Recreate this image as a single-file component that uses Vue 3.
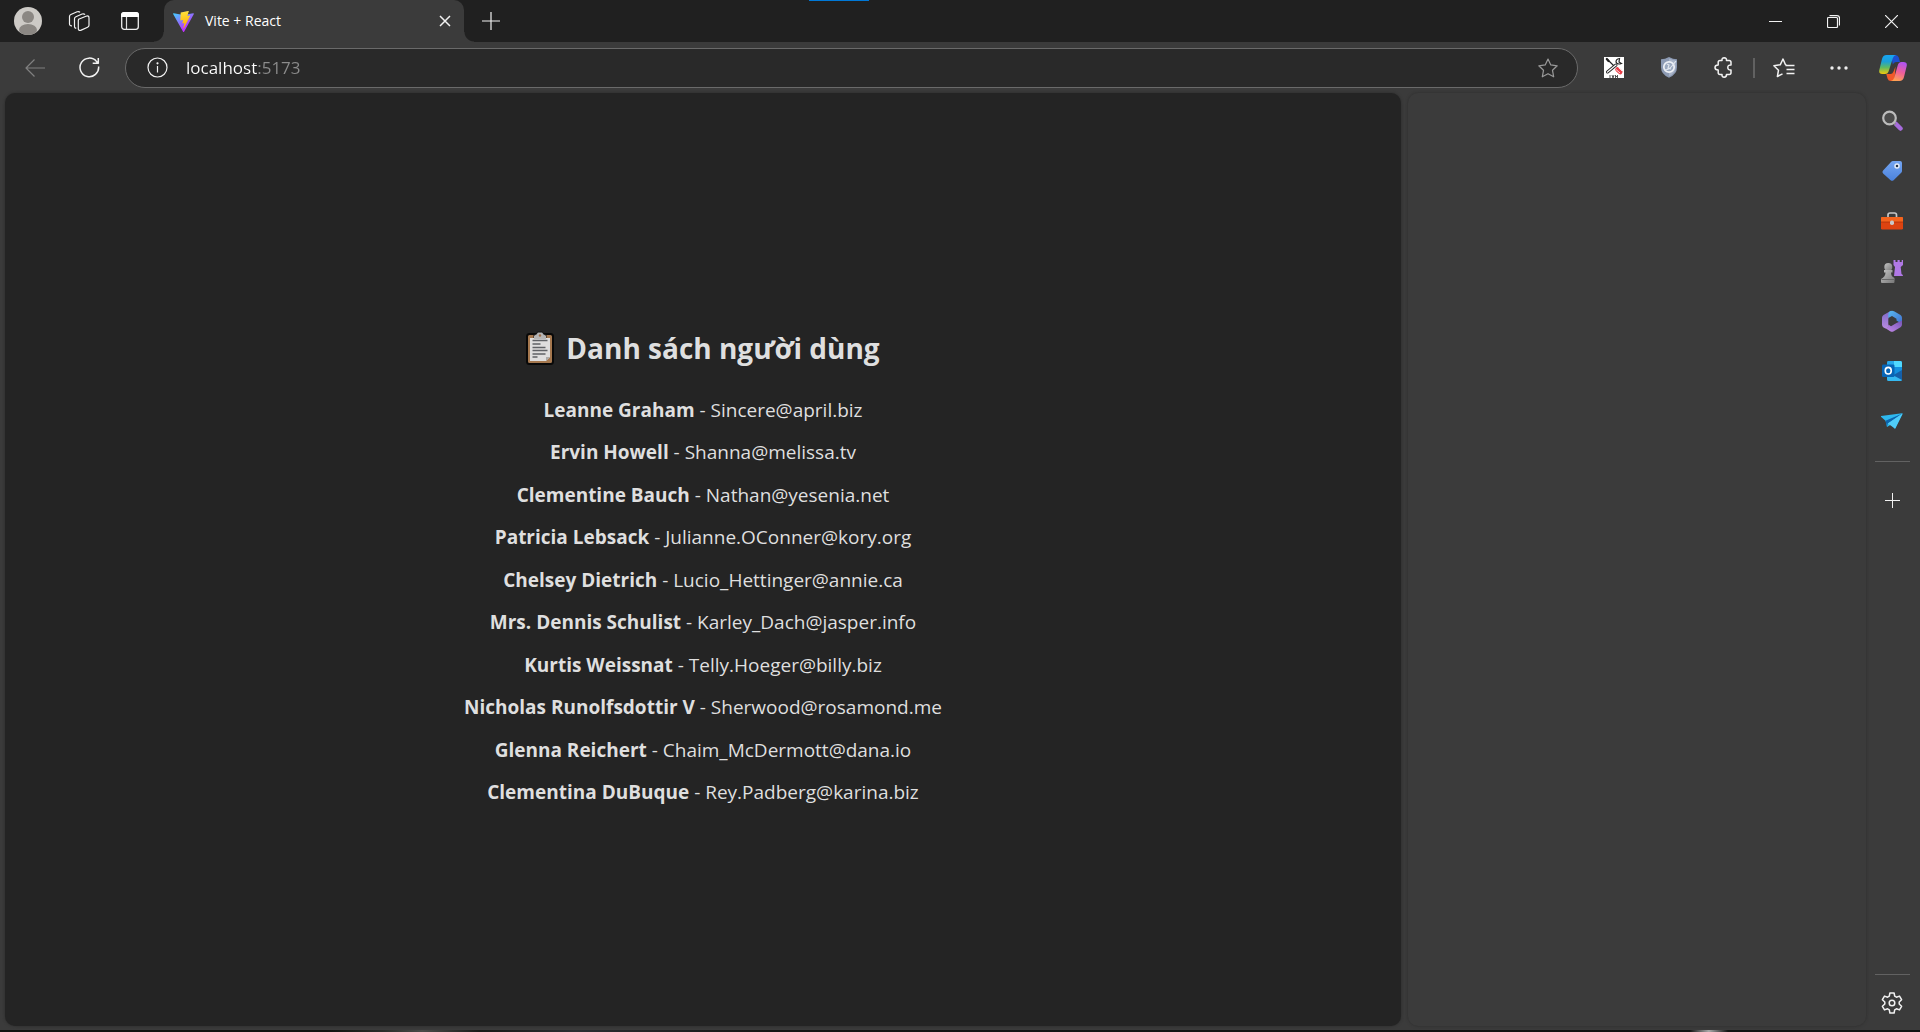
<script setup>
import { ref } from 'vue'

const address = ref('localhost:5173')

const users = [
  { name: 'Leanne Graham', email: 'Sincere@april.biz' },
  { name: 'Ervin Howell', email: 'Shanna@melissa.tv' },
  { name: 'Clementine Bauch', email: 'Nathan@yesenia.net' },
  { name: 'Patricia Lebsack', email: 'Julianne.OConner@kory.org' },
  { name: 'Chelsey Dietrich', email: 'Lucio_Hettinger@annie.ca' },
  { name: 'Mrs. Dennis Schulist', email: 'Karley_Dach@jasper.info' },
  { name: 'Kurtis Weissnat', email: 'Telly.Hoeger@billy.biz' },
  { name: 'Nicholas Runolfsdottir V', email: 'Sherwood@rosamond.me' },
  { name: 'Glenna Reichert', email: 'Chaim_McDermott@dana.io' },
  { name: 'Clementina DuBuque', email: 'Rey.Padberg@karina.biz' },
]
</script>

<template>
  <div class="browser">
    <header class="titlebar">
      <button class="strip-btn" aria-label="Profile">
        <svg width="28" height="28" viewBox="0 0 28 28">
          <clipPath id="avatar"><circle cx="14" cy="14" r="14" /></clipPath>
          <g clip-path="url(#avatar)">
            <rect width="28" height="28" fill="#cdcac6" />
            <ellipse cx="14" cy="23" rx="9" ry="6" fill="#8b8783" />
            <circle cx="14" cy="10" r="6.8" fill="#cdcac6" />
            <circle cx="14" cy="10" r="6" fill="#8b8783" />
          </g>
        </svg>
      </button>
      <button class="strip-btn" aria-label="Workspaces">
        <svg class="line" width="22" height="22" viewBox="0 0 22 22">
          <path d="M10.600 9.300 18 6.200q3-1 3 1.700v7.300q0 1.400-1.400 2l-6.400 2.900q-2.900 1.100-2.900-1.700v-7.200q0-1.300.3-1.900Z" />
          <path d="M8.300 18.200q-1.800.1-1.800-1.900V8.700q0-1.400 1.400-2l6.200-2.700q2-.6 2.900.7" />
          <path d="M4 15.800q-2.500.2-2.500-2.100V6.500q0-1.400 1.400-2l6.200-2.700q2-.6 2.900.6" />
        </svg>
      </button>
      <button class="strip-btn" aria-label="Tab actions">
        <svg width="18" height="18" viewBox="0 0 18 18">
          <rect x=".7" y=".7" width="16.600" height="16.600" rx="2.500" fill="none" stroke="#eee" stroke-width="1.300" />
          <path d="M0 5V3q0-3 3-3h12q3 0 3 3v2Z" fill="#fff" />
          <path d="M5.500 5v12.500" stroke="#ddd" stroke-width="1.200" />
        </svg>
      </button>
      <div class="tab">
        <svg width="21" height="21" viewBox="0 0 256 257">
          <defs>
            <linearGradient id="viteA" x1="0" y1="0" x2=".6" y2=".8">
              <stop offset="0" stop-color="#41d1ff" /><stop offset="1" stop-color="#bd34fe" />
            </linearGradient>
            <linearGradient id="viteB" x1=".4" y1="0" x2=".5" y2="1">
              <stop offset="0" stop-color="#ffea83" /><stop offset=".1" stop-color="#ffdd35" /><stop offset="1" stop-color="#ffa800" />
            </linearGradient>
          </defs>
          <path fill="url(#viteA)" d="M255 38 135 253c-3 4-9 4-12 0L1 38c-3-5 1-11 7-10l120 22 119-22c6-1 10 5 8 10Z" />
          <path fill="url(#viteB)" d="M185 0 97 17c-2 0-3 2-3 4l-5 91c0 2 2 4 4 3l25-5c2-1 4 1 4 4l-8 35c0 3 2 5 4 4l16-5c2 0 4 2 4 4l-12 57c0 3 4 5 6 2l77-151c1-3-1-5-4-4l-25 4c-3 1-5-1-4-3l17-54c0-2-2-4-8-3Z" />
        </svg>
        <span class="tab-title">Vite + React</span>
        <button class="tab-close" aria-label="Close tab">
          <svg class="line bold" width="12" height="12" viewBox="0 0 12 12"><path d="m1 1 10 10M11 1 1 11" /></svg>
        </button>
      </div>
      <button class="new-tab" aria-label="New tab">
        <svg class="line" width="18" height="18" viewBox="0 0 18 18"><path d="M9 0v18M0 9h18" /></svg>
      </button>
      <div class="window-controls">
        <button aria-label="Minimize">
          <svg class="line crisp" width="13" height="13" viewBox="0 0 13 13"><path d="M0 6.500h13" /></svg>
        </button>
        <button aria-label="Restore">
          <svg class="line" width="13" height="13" viewBox="0 0 13 13">
            <rect x=".5" y="2.500" width="10" height="10" rx="1" /><path d="M2.500.6h7.500q2.500 0 2.500 2.500v7.500" />
          </svg>
        </button>
        <button aria-label="Close">
          <svg class="line" width="13" height="13" viewBox="0 0 13 13"><path d="m0 0 13 13M13 0 0 13" /></svg>
        </button>
      </div>
      <i class="drag-mark"></i>
    </header>

    <nav class="toolbar">
      <button class="tool dim" aria-label="Back">
        <svg class="line" width="20" height="18" viewBox="0 0 20 18"><path d="M20 9H1M9.500.5 1 9l8.500 8.500" /></svg>
      </button>
      <button class="tool" aria-label="Refresh">
        <svg class="line bold" width="21" height="21" viewBox="0 0 21 21">
          <path d="M19.600 9.500A9.300 9.300 0 1 1 17.600 4.600L19 6M19.300 1v5.300h-5.600" />
        </svg>
      </button>
      <div class="address">
        <button aria-label="Site information">
          <svg class="line" width="21" height="21" viewBox="0 0 21 21">
            <circle cx="10.500" cy="10.500" r="9.500" /><path d="M10.500 9v6.500" /><circle cx="10.500" cy="6.300" r=".5" fill="#fff" />
          </svg>
        </button>
        <input v-model="address" type="text" aria-label="Address" spellcheck="false" />
        <button class="grey" aria-label="Add to favorites">
          <svg class="line" width="20" height="20" viewBox="0 0 20 20">
            <path d="m10 1 2.800 5.900 6.400.9-4.700 4.500 1.200 6.500L10 15.700l-5.700 3.100 1.200-6.500L.8 7.800l6.400-.9Z" />
          </svg>
        </button>
      </div>
      <div class="extensions">
        <button class="tool" aria-label="Repair tools extension">
          <svg width="20" height="21" viewBox="0 0 20 21">
            <rect width="20" height="21" fill="#fff" />
            <g fill="none" stroke="#222" stroke-linecap="round">
              <path d="m3.500 2.500 6 6" stroke-width="1.200" /><path d="m2.800 2 1.700 2" stroke-width="2.200" />
              <path d="m12 8-8.500 7" stroke-width="3" /><path d="m12 8-8.500 7" stroke="#fff" stroke-width="1.200" />
              <path d="M15.500 1.500q-3.500.5-3.500 3.500 1 3 5.500 1.500l-2.500-1.500Z" stroke-width="1.200" />
            </g>
            <path d="m13.500 12.500 2.800 2.500" stroke="#e8404a" stroke-width="4.500" stroke-linecap="round" />
            <path d="m12 12.500 4 3.500m-1.500-5.500 3.500 3.500" stroke="#fff" stroke-width=".8" />
            <path d="M6 18v3M8 18l1 3 1-3M11.500 18v3M13.500 18v3m-2-1.500h2" stroke="#555" fill="none" />
          </svg>
        </button>
        <button class="tool" aria-label="Security extension">
          <svg width="18" height="21" viewBox="0 0 18 21">
            <path d="M9 0q4 2.200 8 2.200v8q0 7-8 10.500-8-3.500-8-10.500v-8q4 0 8-2.200Z" fill="#8d9bb4" />
            <path d="M9 1.500q3.500 1.700 6.700 1.900v7q0 5.500-6.700 8.800Z" fill="#a8b3c7" />
            <circle cx="9" cy="10" r="5.200" fill="#9ba9bf" stroke="#eef1f6" stroke-width="1.700" />
            <path d="M4 13q5 0 8-4l4-5M7 7l2 1-1 3 3 1" fill="none" stroke="#e2e7ef" stroke-width="1.200" />
          </svg>
        </button>
        <button class="tool" aria-label="Extensions">
          <svg class="line bold" width="19" height="21" viewBox="0 0 19 21">
            <path d="M6 3.500h2q-.3-2.500 2.200-2.700 2.500.2 2.300 2.700h2.700q1.800 0 1.800 1.800V8q-3.200-.2-3.200 2.500t3.200 2.500v2.800q0 1.700-1.800 1.700h-2.700q.2 2.500-2.300 2.700-2.500-.2-2.200-2.700H6q-1.800 0-1.800-1.700V13Q1 13 1 10.500T4.200 8V5.300q0-1.800 1.800-1.800Z" />
          </svg>
        </button>
        <i class="divider"></i>
        <button class="tool" aria-label="Favorites">
          <svg class="line bold" width="22" height="20" viewBox="0 0 22 20">
            <path d="m13.500 7-1-.2L10 1 7.200 6.800l-6.300.9 4.600 4.500-1.100 6.300 5.100-2.700M12.500 7.500h9M13.500 11.500h8M13.500 15.500h8" />
          </svg>
        </button>
        <button class="tool" aria-label="Settings and more">
          <svg width="18" height="4" viewBox="0 0 18 4" fill="#eee"><circle cx="2" cy="2" r="1.700" /><circle cx="9" cy="2" r="1.700" /><circle cx="16" cy="2" r="1.700" /></svg>
        </button>
        <button class="copilot" aria-label="Copilot">
          <svg width="28" height="26" viewBox="0 0 28 26">
            <defs>
              <linearGradient id="copA" x1="0" y1="0" x2="0" y2="1">
                <stop offset="0" stop-color="#17a5f2" /><stop offset=".35" stop-color="#1b9fd8" /><stop offset=".65" stop-color="#5cba64" /><stop offset="1" stop-color="#f3c80c" />
              </linearGradient>
              <linearGradient id="copB" x1=".6" y1="0" x2=".3" y2="1">
                <stop offset="0" stop-color="#b254ef" /><stop offset=".5" stop-color="#ef5f9a" /><stop offset="1" stop-color="#ffa451" />
              </linearGradient>
            </defs>
            <path d="M12 0h4.500q2.500 0 3.300 2.500L21 7h-4q-2.300 0-3.200 2.500Z" fill="#1d4fcf" />
            <path d="M15.500 26H12q-2.700 0-3.500-2.500L7.300 19h4.200q2 0 3-2.500l2-5Z" fill="#f1592a" />
            <path d="M7.500 0H17q-2.300.3-3.300 3.500l-3.800 12Q9 19 6 19H3.300Q-.5 19 .3 15L3 4Q4 0 7.500 0Z" fill="url(#copA)" />
            <path d="M20.500 26H12q2.500-.5 3.300-3.500l3.400-12Q19.500 7 22.500 7h2q4 0 3.200 4L25 22q-1 4-4.500 4Z" fill="url(#copB)" />
          </svg>
        </button>
      </div>
    </nav>

    <div class="workspace">
      <main class="page">
        <section class="content">
          <h2>
            <svg width="28" height="34" viewBox="0 0 28 34" role="img" aria-label="Clipboard">
              <rect x="1" y="3" width="26" height="30" rx="2.500" fill="#a5784f" stroke="#090909" stroke-width="2" />
              <path d="M8 3.500Q11 4 11.500 1h5Q17 4 20 3.500V8H8Z" fill="#aaa" stroke="#111" stroke-width="1" />
              <path d="M4 7h20v19l-4 4H4Z" fill="#dedede" />
              <path d="M8 8V5q3 0 4-3h4q1 3 4 3v3Z" fill="#b5b5b5" />
              <circle cx="14" cy="4.500" r="1.200" fill="#9c6b45" />
              <path d="m20 30 4-4h-4Z" fill="#aaa" />
              <path d="M6.500 9.500h15M6.500 13h8M6.500 16.500h13M6.500 19.500h15M6.500 23h13M6.500 26h5" stroke="#5f6266" stroke-width="1.300" />
            </svg>
            <span>Danh sách người dùng</span>
          </h2>
          <ul>
            <li v-for="user in users" :key="user.email">
              <strong>{{ user.name }}</strong> - {{ user.email }}
            </li>
          </ul>
        </section>
      </main>

      <aside class="side-panel"></aside>

      <aside class="sidebar">
        <button aria-label="Search">
          <svg width="22" height="22" viewBox="0 0 22 22">
            <path d="m15 14 4.500 4.500" stroke="#a76bdd" stroke-width="4.500" stroke-linecap="round" /><path d="m12 12 2.500 2.500" stroke="#888" stroke-width="2" />
            <circle cx="8.500" cy="8" r="6.300" fill="#4b4b4b" stroke="#bcbcbc" stroke-width="2.200" />
          </svg>
        </button>
        <button aria-label="Shopping">
          <svg width="22" height="22" viewBox="0 0 22 22">
            <defs><linearGradient id="tag" x1="0" y1="0" x2="0" y2="1"><stop offset="0" stop-color="#74a5f2" /><stop offset="1" stop-color="#4b82dc" /></linearGradient></defs>
            <path d="M12 1h7q2 0 2 2v8q0 1-.8 1.800l-7.600 7.400q-1.500 1.300-3 0l-7.500-6.700q-1.500-1.400 0-2.900L10 2q.8-1 2-1Z" fill="url(#tag)" />
            <circle cx="16" cy="6" r="2" fill="#26354b" stroke="#e5edf9" stroke-width="1.500" />
          </svg>
        </button>
        <button aria-label="Tools">
          <svg width="22" height="18" viewBox="0 0 22 18">
            <path d="M7 6V3q0-2 2-2h4.500q2 0 2 2v3" fill="none" stroke="#c7c7c7" stroke-width="1.700" />
            <rect y="5" width="22" height="12.500" rx="1.300" fill="#dd4310" /><path d="M1 5h20q1 0 1 1v4H0V6q0-1 1-1Z" fill="#f5641d" />
            <path d="M0 10h22" stroke="#a8300a" stroke-width=".8" /><rect x="9" y="8.500" width="4" height="4.500" rx="1.700" fill="#c8c8c8" />
          </svg>
        </button>
        <button aria-label="Games">
          <svg width="22" height="23" viewBox="0 0 22 23">
            <defs><linearGradient id="pawn" x1="0" y1="0" x2="1" y2="1"><stop offset="0" stop-color="#c4c4c4" /><stop offset="1" stop-color="#777" /></linearGradient></defs>
            <path d="M12.500 0h2v2h2V0h2.200v2h2V0H22v5l-2.300 2 .8 7q1.500.5 1.500 2h-9l1-9-1.500-2Z" fill="#b078e5" />
            <circle cx="7.300" cy="7" r="4" fill="url(#pawn)" /><path d="M3 10h8.500v2.500H10q0 4 3.500 5.500V22q0 1-1 1H1q-1 0-1-1v-3q4.500-2.500 4.500-6.500H3Z" fill="url(#pawn)" /><path d="M.5 19.500h13" stroke="#686868" />
          </svg>
        </button>
        <button aria-label="Microsoft 365">
          <svg width="20" height="22" viewBox="0 0 20 22">
            <defs>
              <linearGradient id="mA" x1="0" y1="0" x2="0" y2="1"><stop offset="0" stop-color="#7c68c9" /><stop offset="1" stop-color="#b78adf" /></linearGradient>
              <linearGradient id="mB" x1="0" y1="0" x2="1" y2="1"><stop offset="0" stop-color="#58b9ef" /><stop offset="1" stop-color="#426fce" /></linearGradient>
              <linearGradient id="mC" x1="0" y1="1" x2="1" y2="0"><stop offset="0" stop-color="#c58be8" /><stop offset="1" stop-color="#7655b8" /></linearGradient>
            </defs>
            <path d="M9 .7 1.500 5Q0 6 0 7.700v7q0 1.800 1.500 2.700l2 1q3 0 2.800-3V9Q6.300 6 9 4.500Z" fill="url(#mA)" />
            <path d="M8 1.200q2-1 4 0L18.500 5Q20 6 20 7.700V14l-5.500-3.500V8.700L10 6 6.300 8V5Q6.300 2 8 1.200Z" fill="url(#mB)" />
            <path d="m3.500 18.300 4.700 2.900q1.800 1 3.600 0l6.700-3.900q1.500-1 1.500-2.700v-4L14.500 13 9 16.200l-2.700-1.600q0 3.900-2.800 3.700Z" fill="url(#mC)" />
          </svg>
        </button>
        <button aria-label="Outlook">
          <svg width="20" height="20" viewBox="0 0 20 20">
            <rect x="5" width="15" height="18" rx="1.500" fill="#1490df" /><path d="M12 0h6.500Q20 0 20 1.500V6h-8Z" fill="#50d9ff" /><path d="M5 1.500Q5 0 6.500 0H12v6H5Z" fill="#28a8ea" />
            <path d="m20 9-10 6v5h8.500q1.500 0 1.500-1.500Z" fill="#155fa8" /><path d="m5 11 15 8q-.5 1-1.500 1h-12Q5 20 5 18.500Z" fill="#35b9f1" />
            <rect y="3.500" width="12.500" height="12.500" rx="1.200" fill="#0765b6" /><ellipse cx="6.250" cy="9.700" rx="3" ry="3.300" fill="none" stroke="#fff" stroke-width="1.600" />
          </svg>
        </button>
        <button aria-label="Drop">
          <svg width="22" height="16" viewBox="0 0 22 16">
            <path d="M0 3 21 .3q1 0 .5 1L14.500 15q-.6 1-1.300 0L10 11.500 6 14 4.500 7.700.2 4Q-.3 3.200 0 3Z" fill="#2eb8ee" /><path d="M4.500 7.700 21.500.4 6.800 10.500 6 14Z" fill="#0d64ad" /><path d="M6.800 10.500 21.500.4l-7 14.600q-.6 1-1.300 0Z" fill="#50cdf8" />
          </svg>
        </button>
        <hr />
        <button aria-label="Customize">
          <svg class="line crisp" width="15" height="15" viewBox="0 0 15 15"><path d="M7.500 0v15M0 7.500h15" /></svg>
        </button>
        <hr class="last" />
        <button aria-label="Settings">
          <svg class="line bold" width="22" height="22" viewBox="0 0 22 22">
            <path d="M8.900 1h4.200l.6 3.200 1.700 1 3.100-1.100 2.100 3.600L18.200 10v2l2.400 2.300-2.100 3.600-3.100-1.100-1.700 1-.6 3.200H8.900l-.6-3.200-1.700-1-3.100 1.100-2.100-3.600L3.800 12v-2L1.400 7.700l2.100-3.600 3.100 1.100 1.700-1Z" stroke-linejoin="round" /><circle cx="11" cy="11" r="2.800" />
          </svg>
        </button>
      </aside>
    </div>
    <footer class="desktop-edge"></footer>
  </div>
</template>

<style>
body {
  background: #3b3b3b;
}
</style>

<style scoped>
.browser {
  display: flex;
  flex-direction: column;
  min-height: 100vh;
  background: #3b3b3b;
  color: #fff;
  font-family: "Open Sans", "Noto Sans", sans-serif;
}

button {
  display: flex;
  align-items: center;
  justify-content: center;
  flex: none;
  padding: 0;
  border: 0;
  background: none;
  color: #f2f2f2;
}

svg {
  flex: none;
  display: block;
}

.line {
  fill: none;
  stroke: currentColor;
  stroke-width: 1.2;
  stroke-linejoin: round;
}

.line.bold {
  stroke-width: 1.5;
}

.line.crisp {
  stroke-width: 1;
}

/* Tab strip */
.titlebar {
  position: relative;
  display: flex;
  height: 42px;
  padding-left: 2px;
  background: #202020;
}

.strip-btn {
  width: 51px;
}

.tab {
  position: relative;
  display: flex;
  align-items: center;
  width: 300px;
  margin-left: 9px;
  padding: 0 12px 0 9px;
  box-sizing: border-box;
  border-radius: 10px 10px 0 0;
  background: #3b3b3b;
}

.tab::before,
.tab::after {
  content: "";
  position: absolute;
  bottom: 0;
  width: 10px;
  height: 10px;
}

.tab::before {
  right: 100%;
  background: radial-gradient(circle at 0 0, #202020 9px, #3b3b3b 10px);
}

.tab::after {
  left: 100%;
  background: radial-gradient(circle at 100% 0, #202020 9px, #3b3b3b 10px);
}

.tab-title {
  flex: 1;
  margin-left: 11px;
  font-size: 14px;
  line-height: 20px;
}

.tab-close {
  width: 14px;
  height: 14px;
}

.new-tab {
  width: 53px;
}

.window-controls {
  display: flex;
  margin-left: auto;
}

.window-controls button {
  width: 58px;
}

.drag-mark {
  position: absolute;
  top: 0;
  left: 809px;
  width: 60px;
  height: 1px;
  background: #0078d7;
}

/* Toolbar */
.toolbar {
  display: flex;
  align-items: center;
  height: 51px;
  padding-left: 7px;
}

.tool {
  width: 55px;
  height: 40px;
}

.tool.dim {
  color: #808080;
}

.address {
  display: flex;
  align-items: center;
  flex: 1;
  height: 40px;
  margin: 0 8px;
  padding: 0 19px 0 21px;
  box-sizing: border-box;
  border: 1px solid #6a6a6a;
  border-radius: 20px;
  background: #292929;
}

.address .grey {
  color: #999;
}

.address input {
  flex: 1;
  min-width: 0;
  margin-left: 18px;
  padding: 0;
  border: 0;
  outline: 0;
  background: linear-gradient(90deg, #fff 71px, #8c8c8c 71px);
  background-clip: text;
  color: transparent;
  font: 17px/24px "Open Sans", "Noto Sans", sans-serif;
}

.extensions {
  display: flex;
  align-items: center;
}

.divider {
  width: 2px;
  height: 20px;
  margin: 0 1px 0 2px;
  background: #616161;
}

.copilot {
  width: 54px;
  height: 40px;
}

/* Page and side areas */
.workspace {
  display: flex;
  flex: 1;
  padding-left: 5px;
}

.page {
  display: flex;
  align-items: center;
  justify-content: center;
  flex: 1;
  margin-bottom: 4px;
  border-radius: 10px;
  background: #242424;
  box-shadow: 0 0 3px #2a2a2a;
}

.content {
  padding-top: 26px;
  color: #dfdfdf;
  text-align: center;
}

.content h2 {
  display: flex;
  align-items: center;
  justify-content: center;
  gap: 12px;
  margin: 0 0 24px;
  font-size: 28px;
  line-height: 45px;
}

.content ul {
  margin: 0;
  padding: 0;
  list-style: none;
  font-size: 19px;
  line-height: 30px;
}

.content li {
  margin-bottom: 12px;
}

.content li:nth-child(even) {
  margin-bottom: 13px;
}

.side-panel {
  width: 458px;
  margin: 0 0 4px 7px;
  border-radius: 10px;
  box-shadow: 0 0 3px #2c2c2c;
}

.sidebar {
  display: flex;
  flex-direction: column;
  align-items: center;
  width: 54px;
  padding: 3px 2px 2px 0;
  box-sizing: border-box;
}

.sidebar button {
  width: 52px;
  height: 50px;
}

.sidebar hr {
  width: 35px;
  height: 1px;
  margin: 15px 0 13px;
  border: 0;
  background: #626262;
}

.sidebar hr.last {
  margin: auto 0 3px;
}

.desktop-edge {
  height: 2px;
  background: linear-gradient(90deg, #10130f 17%, #2a2d2a 20%, #4a4b49 22%, #181a18 25%, #2b2e31 30%, #141514 40%, #121312 88%, #aaa 89%, #121312 90%);
}
</style>
